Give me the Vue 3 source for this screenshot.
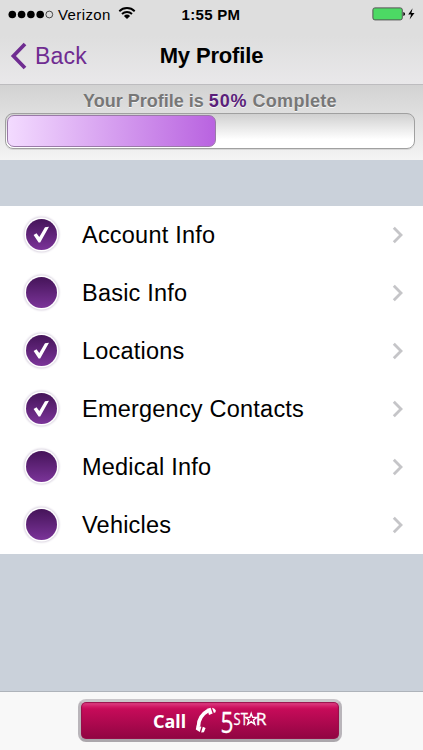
<template>
  <div class="screen">
    <header class="top-bar">
      <div class="status-bar">
        <div class="status-left">
          <svg class="signal" width="46" height="9" viewBox="0 0 46 9">
            <circle v-for="n in 4" :key="n" :cx="n * 9.3 - 5" cy="4.5" r="3.8" fill="#000" />
            <circle cx="41.3" cy="4.5" r="3.4" fill="none" stroke="#222" stroke-width="0.8" />
          </svg>
          <span class="carrier">Verizon</span>
          <svg class="wifi" width="18" height="14" viewBox="0 0 18 14">
            <path d="M1.3 5.2a11 11 0 0 1 15.4 0M4 8a7.2 7.2 0 0 1 10 0" fill="none" stroke="#000" stroke-width="1.9" />
            <path d="M9 13L5.9 9.9a4.5 4.5 0 0 1 6.2 0z" fill="#000" />
          </svg>
        </div>
        <span class="time">1:55 PM</span>
        <div class="status-right">
          <svg width="44" height="14" viewBox="0 0 44 14">
            <rect x="0.9" y="0.9" width="29.4" height="12" rx="2" fill="#4cd964" stroke="#555" stroke-width="1" />
            <path d="M31.3 5v4q1.8-.4 1.8-2t-1.8-2z" fill="#000" />
            <path d="M40.6 1.2L36.2 7.6h2.9L37.6 12.6l4.9-6.6h-3.1z" fill="#000" />
          </svg>
        </div>
      </div>
      <nav class="nav-bar">
        <button class="back">
          <svg width="17" height="28" viewBox="0 0 17 28">
            <path d="M15 2L3.4 14 15 26" fill="none" stroke="#6f2c91" stroke-width="3.7" />
          </svg>
          <span>Back</span>
        </button>
        <h1>My Profile</h1>
      </nav>
    </header>

    <section class="progress">
      <p>Your Profile is <strong>{{ percent }}%</strong> <span>Complete</span></p>
      <div class="track">
        <div class="fill" :style="{ width: (percent + 1.4) + '%' }"></div>
      </div>
    </section>

    <ul class="sections">
      <li v-for="item in items" :key="item.name">
        <span class="bullet">
          <svg v-if="item.done" width="17" height="18" viewBox="0 0 17 18">
            <path d="M0.6 10L3.5 8.2L6.3 12L12 2.2L16 1.8L7.2 17.4H5.6Z" fill="#fff" />
          </svg>
        </span>
        <span class="label">{{ item.name }}</span>
        <svg class="chevron" width="12" height="18" viewBox="0 0 12 18">
          <path d="M1.8 1.8L9 9l-7.2 7.2" fill="none" stroke="#c5c5c8" stroke-width="2.8" />
        </svg>
      </li>
    </ul>

    <footer class="bottom-bar">
      <button class="call">
        <span>Call</span>
        <svg class="phone" width="22" height="27" viewBox="0 0 22 27">
          <path d="M13.4 3.4Q3.4 9 3.4 19.6" fill="none" stroke="#fff" stroke-width="3.6" />
          <path d="M12.2 1.8L15.6 .7L17.6 6.4L14 8Z" fill="#fff" />
          <path d="M17 .8Q19.4 1 20.8 3.2L20.5 5.2L18.9 6Z" fill="#fff" />
          <path d="M1.6 18.4L6.4 19.8L4.8 24.9L.8 22.4Z" fill="#fff" />
          <path d="M7.8 19.8L10.6 21L8.9 25.2L6.1 25.4Z" fill="#fff" />
        </svg>
        <svg class="brand" width="47" height="40" viewBox="0 0 47 40">
          <text x="0.4" y="31.8" font-size="29" textLength="13" lengthAdjust="spacingAndGlyphs">5</text>
          <text x="13.6" y="23.8" font-size="17" textLength="14.2" lengthAdjust="spacingAndGlyphs">ST</text>
          <path d="M31.2 12.4l1.4 4h4.3l-3.4 2.6 1.2 4.2-3.5-2.5-3.5 2.5 1.2-4.2-3.4-2.6h4.3z" fill="none" stroke="#fff" stroke-width="1.4" />
          <text x="35.8" y="23.8" font-size="17" textLength="10.8" lengthAdjust="spacingAndGlyphs">R</text>
        </svg>
      </button>
    </footer>
  </div>
</template>

<script setup>
const percent = 50

const items = [
  { name: 'Account Info', done: true },
  { name: 'Basic Info', done: false },
  { name: 'Locations', done: true },
  { name: 'Emergency Contacts', done: true },
  { name: 'Medical Info', done: false },
  { name: 'Vehicles', done: false }
]
</script>

<style>
body {
  margin: 0;
}
</style>

<style scoped>
.screen {
  display: flex;
  flex-direction: column;
  height: 750px;
  overflow: hidden;
  background: #cad1da;
  font-family: "Liberation Sans", Arial, sans-serif;
  color: #000;
}

button {
  border: none;
  padding: 0;
  background: none;
  font-family: inherit;
}

svg {
  display: block;
  flex: none;
}

.top-bar {
  box-sizing: border-box;
  height: 85px;
  background: linear-gradient(#dedede 0, #dedede 36px, #e9e8ea 84px);
  border-bottom: 1px solid #bdbcbf;
}

.status-bar {
  display: grid;
  grid-template-columns: 1fr auto 1fr;
  align-items: center;
  height: 28px;
  padding: 0 9px 0 8px;
  font-size: 15px;
}

.status-left {
  display: flex;
  align-items: center;
}

.carrier {
  margin-left: 4px;
  letter-spacing: 0.4px;
}

.wifi {
  margin-left: 7px;
  margin-top: -2px;
}

.time {
  font-weight: bold;
  letter-spacing: 0.3px;
}

.status-right {
  display: flex;
  justify-content: flex-end;
  margin-right: -2px;
}

.nav-bar {
  display: grid;
  grid-template-columns: 1fr auto 1fr;
  align-items: center;
  height: 56px;
  padding: 0 10px;
}

.back {
  display: flex;
  align-items: center;
  gap: 8px;
  color: #6f2c91;
  font-size: 23px;
  letter-spacing: 0.2px;
}

.nav-bar h1 {
  margin: 0;
  font-size: 22px;
  font-weight: bold;
  letter-spacing: -0.15px;
}

.progress {
  box-sizing: border-box;
  height: 75px;
  padding: 6px 8px 0 5px;
  background: linear-gradient(#d2d2d2, #f4f4f4);
}

.progress p {
  margin: 0 0 2px;
  text-align: center;
  font-size: 18px;
  line-height: 20px;
  font-weight: bold;
  color: #777;
  text-shadow: 0 1px 0 #f5f5f5;
}

.progress p span {
  letter-spacing: 0.3px;
}

.progress strong {
  letter-spacing: 0.9px;
  color: #5a1f7a;
}

.track {
  box-sizing: border-box;
  height: 36px;
  padding: 1px;
  border: 1px solid #a0a0a0;
  border-radius: 8px;
  background: linear-gradient(#d0d0d0, #fff 75%);
  box-shadow: 0 1px 0 #d8d8d8;
}

.fill {
  box-sizing: border-box;
  height: 32px;
  border: 1px solid #9a7aa8;
  border-radius: 7px;
  background: linear-gradient(90deg, #f3dbff, #b963e0);
}

.sections {
  margin: 46px 0 0;
  padding: 0;
  list-style: none;
  background: #fff;
}

.sections li {
  display: flex;
  align-items: center;
  height: 58px;
  padding: 0 19px 0 26px;
}

.bullet {
  display: flex;
  align-items: center;
  justify-content: center;
  width: 31px;
  height: 31px;
  margin-top: -2px;
  border-radius: 50%;
  background: linear-gradient(#451459, #7b3499);
  box-shadow: 0 0 0 1.5px #fff, 0 0 2px 2.5px #dcd6e2;
}

.label {
  flex: 1;
  margin-left: 25px;
  font-size: 23.5px;
  letter-spacing: 0.22px;
}

.chevron {
  margin-top: 0;
}

.bottom-bar {
  box-sizing: border-box;
  display: flex;
  justify-content: center;
  height: 59px;
  margin-top: auto;
  padding-top: 7px;
  padding-right: 3px;
  border-top: 1px solid #aeb3ba;
  background: #f8f8f8;
}

.call {
  box-sizing: border-box;
  display: flex;
  align-items: center;
  justify-content: center;
  width: 264px;
  height: 43px;
  border: 3px solid #b9b5ba;
  border-top-color: #c9c6ca;
  border-bottom-color: #aba7ac;
  border-radius: 8px;
  background: linear-gradient(#e0488a 0, #cf1663 5px, #c60b59 7px, #900542 100%);
  box-shadow: inset 0 0 1px 1px #96104b;
  color: #fff;
  font-family: "Noto Sans", "Open Sans", sans-serif;
  font-size: 18px;
  font-weight: bold;
}

.phone {
  margin-left: 9px;
}

.brand {
  margin-left: 3px;
  fill: #fff;
  stroke: #fff;
  stroke-width: 0.3;
  font-family: "Open Sans", sans-serif;
  font-weight: normal;
}
</style>
